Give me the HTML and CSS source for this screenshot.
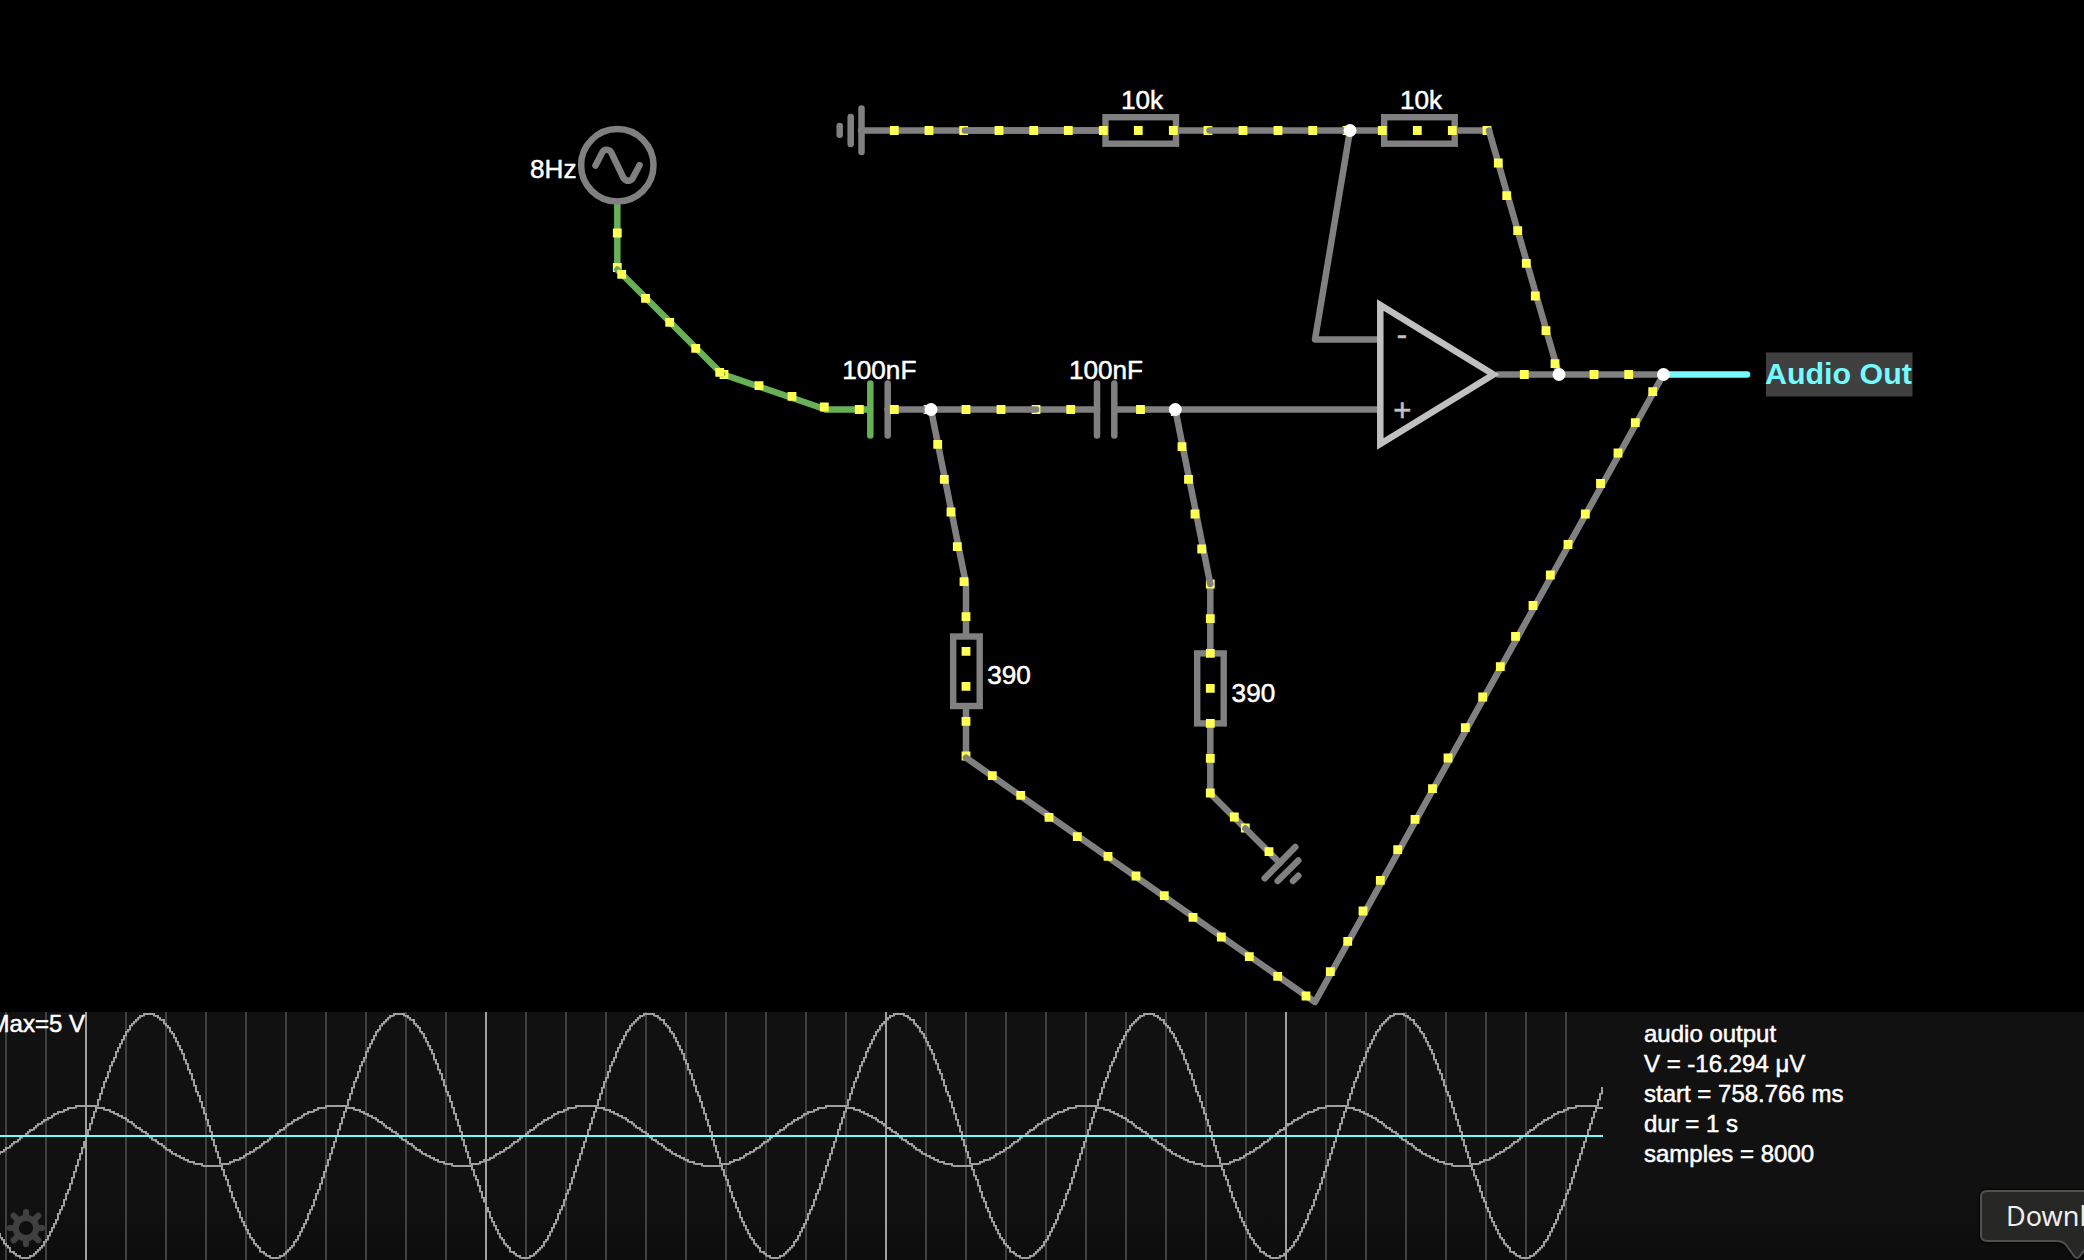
FILE: index.html
```html
<!DOCTYPE html>
<html lang="en">
<head>
<meta charset="utf-8">
<title>Circuit simulator</title>
<link rel="stylesheet" href="styles.css">
</head>
<body>
<main class="app">
  <svg class="circuit" viewBox="0 0 2084 1012" role="img" aria-label="High-pass filter circuit">
    <!-- wires that pass beneath current dots at junctions -->
    <g class="wire">
      <path d="M861 130.5H1103M1178 130.5H1209"/>
      <path d="M966 586V635M966 708V757.5"/>
      <path d="M1210.3 585V652M1210.3 725V793.5"/>
      <path d="M1459 130.5H1489"/>
      <path d="M1210.3 793.5L1245.3 828.5"/>
      <path d="M1036 409.5H1097"/>
    </g>
    <g class="wire live">
      <path d="M617.3 204V269.5"/>
      <path d="M722 374L826 409.5"/>
    </g>
    <path class="dots" d="M617.3 267.5h.01M724 374.5h.01M963.7 130.5h.01M1208 130.5h.01M1487 130.5h.01M1036 409.5h.01M966 756h.01M1210.3 584h.01M1245.3 828h.01M928 409.5h.01M1347 130.5h.01M1175.3 411.5h.01"/>

    <g class="wire">
      <path d="M965 130.5H1100M1209.5 130.5H1381"/>
      <path d="M1350 130.5L1315 339.5H1378"/>
      <path d="M1489 130.5L1559 374.5"/>
      <path d="M1498 374.5H1663"/>
      <path d="M887.5 409.5H1036"/>
      <path d="M1114.5 409.5H1378"/>
      <path d="M931 409.5L966 584M1175.3 409.5L1210.3 584"/>
      <path d="M966 757.7L1315 1002L1663.4 374.5"/>
      <path d="M1245.3 828.5L1280 863"/>
    </g>
    <g class="wire live">
      <path d="M617.3 269.5L722 374"/>
      <path d="M826 409.5H870"/>
    </g>
    <path class="wire output" d="M1663.4 374.5H1747"/>

    <!-- grounds -->
    <g class="wire">
      <path d="M861.5 108.5V152M850.7 117V144M839.7 126V134.7"/>
      <path d="M1264.7 878.3L1295.3 847M1277.7 881L1298.3 860.5M1293 881L1298.3 875.7"/>
    </g>
    <!-- capacitor plates -->
    <path class="wire live" d="M870.3 383.5V435.5"/>
    <path class="wire" d="M887.7 383.5V435.5M1097 383.5V435.5M1114.3 383.5V435.5"/>
    <!-- resistors -->
    <g class="resistor">
      <rect x="1105.5" y="117.2" width="70.5" height="26.5"/>
      <rect x="1384.2" y="117.2" width="70.5" height="26.5"/>
      <rect x="953.2" y="636.5" width="26.5" height="69.5"/>
      <rect x="1197.2" y="653.4" width="26.5" height="70"/>
    </g>
    <!-- sine source -->
    <g class="wire">
      <circle cx="617.3" cy="165.3" r="36.2"/>
      <path d="M595.5 165.5L602.5 152Q604 149.8 606.3 149.8Q609.5 149.8 611 152L623.5 178Q625.5 180.8 628.5 180.8Q631.2 180.8 632.8 178L639.5 165.2"/>
    </g>
    <!-- op-amp -->
    <g class="opamp">
      <path d="M1380.3 305L1493.5 374.5L1380.3 444Z"/>
      <text x="1402" y="344.5">-</text>
      <text x="1402.3" y="421">+</text>
    </g>

    <path class="dots" d="M617.3 233h.01M621.7 274.3h.01M645.5 298.3h.01M669.7 322.3h.01M695.7 348.3h.01M719.7 372.3h.01M759 385.7h.01M792 396.3h.01M824.3 407h.01M859.3 409.5h.01M894.3 409.5h.01M966 409.5h.01M1001 409.5h.01M1070.7 409.5h.01M1140.5 409.5h.01
      M937.7 444.3h.01M944.3 479.3h.01M951 512h.01M957.3 546.7h.01M964 581.7h.01M966 616.7h.01M966 651.3h.01M966 686.3h.01M966 721.3h.01
      M992.3 775.7h.01M1020.7 795.3h.01M1049 817.3h.01M1077.3 836.7h.01M1108 856.3h.01M1136 876h.01M1164.3 895.7h.01M1193 917.3h.01M1221.3 937h.01M1249.3 956.7h.01M1277.7 976.3h.01M1306 996h.01
      M1330.3 971.7h.01M1347.7 941.3h.01M1363 911h.01M1380.3 880.3h.01M1397.7 849.7h.01M1415 819.3h.01M1432.5 788.7h.01M1448 758h.01M1465.3 727.7h.01M1482.7 697h.01M1500.3 666.7h.01M1515.5 636.3h.01M1533 605.5h.01M1550.3 575h.01M1568 544.5h.01M1585.3 514h.01M1600.5 483.5h.01M1618 453h.01M1635.3 422.7h.01M1652.7 391.7h.01
      M1182 446.7h.01M1188.5 479.3h.01M1195 514h.01M1201.7 549h.01M1210.3 618.7h.01M1210.3 653.3h.01M1210.3 688.3h.01M1210.3 723.3h.01M1210.3 758.3h.01M1210.3 793h.01M1234.3 817h.01M1269 851.7h.01
      M894.3 130.5h.01M929 130.5h.01M999 130.5h.01M1033.7 130.5h.01M1068.3 130.5h.01M1103.3 130.5h.01M1138.3 130.5h.01M1173.3 130.5h.01M1243 130.5h.01M1278 130.5h.01M1312.7 130.5h.01M1382.3 130.5h.01M1417.3 130.5h.01M1452.3 130.5h.01
      M1498.3 163h.01M1506.7 195.7h.01M1517.7 230.7h.01M1526.3 263.3h.01M1535.3 296h.01M1546 330.7h.01M1555 363.7h.01M1524.3 374.5h.01M1594 374.5h.01M1628.7 374.5h.01"/>
    <g class="node">
      <circle cx="1350" cy="130.5" r="6.5"/>
      <circle cx="931" cy="409.5" r="6.5"/>
      <circle cx="1175.3" cy="409.5" r="6.5"/>
      <circle cx="1559" cy="374.5" r="6.5"/>
      <circle cx="1663.5" cy="374.5" r="6.5"/>
    </g>

    <g class="value">
      <text x="530" y="178">8Hz</text>
      <text class="centered" x="879.3" y="379">100nF</text>
      <text class="centered" x="1106" y="379">100nF</text>
      <text class="centered" x="1142" y="109">10k</text>
      <text class="centered" x="1421" y="109">10k</text>
      <text x="987.3" y="684">390</text>
      <text x="1231.6" y="702">390</text>
    </g>
    <rect class="tag" x="1766" y="352.5" width="146.5" height="44"/>
    <text class="tag-text" x="1765" y="384">Audio Out</text>
  </svg>

  <section class="scope">
    <svg class="plot" width="1604" height="248" viewBox="0 0 1604 248">
      <g id="grid"></g>
      <g id="waves" class="wave"></g>
      <rect class="trace" x="0" y="123" width="1603" height="2"/>
      <text class="peak" x="85" y="20">Max=5 V</text>
      <g class="gear" transform="translate(26 216)">
        <circle r="10.2"/>
        <path d="M0-12V-16M0 12V16M-12 0H-16M12 0H16M8.8-8.8L12.3-12.3M-8.8-8.8L-12.3-12.3M8.8 8.8L12.3 12.3M-8.8 8.8L-12.3 12.3"/>
      </g>
    </svg>
    <div class="info">
      <div>audio output</div>
      <div>V = -16.294 μV</div>
      <div>start = 758.766 ms</div>
      <div>dur = 1 s</div>
      <div>samples = 8000</div>
    </div>
  </section>
</main>
<div class="tooltip">
  <svg class="tooltip-shape" width="108" height="74" viewBox="0 0 108 74">
    <path d="M120 5H12Q6 5 6 11V49Q6 55 12 55H81Q88 55 91 59L99 70Q102 74 105 70L113 59"/>
  </svg>
  <span class="tooltip-text">Downl</span>
</div>
<script src="scope.js"></script>
</body>
</html>
```
FILE: styles.css
```css
body {
  margin: 0;
  background: #000;
  color: #fff;
  font-family: "Liberation Sans", Arial, sans-serif;
  overflow: hidden;
}

.app {
  display: flex;
  flex-direction: column;
  width: 2084px;
  height: 1260px;
}

.circuit {
  display: block;
  width: 2084px;
  height: 1012px;
  flex: none;
}

.wire {
  fill: none;
  stroke: #808080;
  stroke-width: 6.5;
  stroke-linecap: round;
  stroke-linejoin: round;
}

.live {
  stroke: #67b058;
}

.output {
  stroke: #73fbfd;
}

.dots {
  fill: none;
  stroke: #ffff54;
  stroke-width: 8.8;
  stroke-linecap: square;
}

.resistor {
  fill: none;
  stroke: #808080;
  stroke-width: 6.4;
}

.opamp path {
  fill: none;
  stroke: #c0c0c0;
  stroke-width: 6.5;
}

.opamp text {
  fill: #c0c0c0;
  stroke: #c0c0c0;
  stroke-width: 0.6;
  font-size: 31px;
  text-anchor: middle;
}

.node {
  fill: #fff;
}

.value {
  fill: #fff;
  stroke: #fff;
  stroke-width: 0.5;
  font-size: 26.15px;
}

.centered {
  text-anchor: middle;
}

.tag {
  fill: #404040;
}

.tag-text {
  fill: #73fbfd;
  font-size: 30.4px;
  font-weight: bold;
}

.scope {
  display: flex;
  flex: 1;
  background: linear-gradient(#111 75%, #0d0d0d);
}

.plot {
  display: block;
  flex: none;
}

.minor {
  fill: #404040;
}

.major {
  fill: #a0a0a0;
}

.wave {
  fill: #a0a0a0;
}

.trace {
  fill: #73fbfd;
}

.peak {
  fill: #fff;
  stroke: #fff;
  stroke-width: 0.5;
  font-size: 24px;
  text-anchor: end;
}

.gear {
  fill: none;
  stroke: #404040;
  stroke-width: 6.2;
  stroke-linecap: round;
}

.info {
  padding: 7px 0 0 40px;
  font-size: 24px;
  line-height: 30px;
  -webkit-text-stroke: 0.5px #fff;
}

.tooltip {
  position: absolute;
  left: 1975px;
  top: 1186px;
  width: 109px;
  height: 74px;
  overflow: hidden;
}

.tooltip-shape {
  display: block;
  overflow: visible;
  fill: #272725;
  stroke: #505050;
  stroke-width: 2;
  filter: drop-shadow(0 0 1px #000) drop-shadow(0 0 1px #000);
}

.tooltip-text {
  position: absolute;
  left: 31px;
  top: 12px;
  font: 27px/36px "Noto Sans", sans-serif;
  color: #eee;
}
```
FILE: scope.js
```javascript
const NS = "http://www.w3.org/2000/svg";
const CELL = 2;
const MID = 124;

function addRect(parent, x, y, w, h, cls) {
  const r = document.createElementNS(NS, "rect");
  r.setAttribute("x", x);
  r.setAttribute("y", y);
  r.setAttribute("width", w);
  r.setAttribute("height", h);
  r.setAttribute("class", cls);
  parent.appendChild(r);
}

// time divisions, with every tenth one emphasised
const grid = document.getElementById("grid");
for (let x = 5; x <= 1565; x += 40) {
  addRect(grid, x, 0, CELL, 248, (x - 85) % 400 === 0 ? "major" : "minor");
}

// one min/max bar per sample column
function wave(amplitude, peakX) {
  const level = x => {
    const v = amplitude * Math.cos(2 * Math.PI * (x - peakX) / 250);
    return Math.round(v / CELL) * CELL;
  };
  let d = "";
  for (let x = -1; x < 1603; x += CELL) {
    const a = MID - level(x);
    const b = MID - level(x + CELL);
    const top = Math.min(a, b) - 1;
    const h = Math.abs(a - b) + (a === b ? CELL : CELL / 2 + 0.5);
    d += `M${x} ${top}h${CELL}v${h}h-${CELL}z`;
  }
  const p = document.createElementNS(NS, "path");
  p.setAttribute("d", d);
  document.getElementById("waves").appendChild(p);
}
wave(122, 149.5);
wave(30, 86.5);
```
